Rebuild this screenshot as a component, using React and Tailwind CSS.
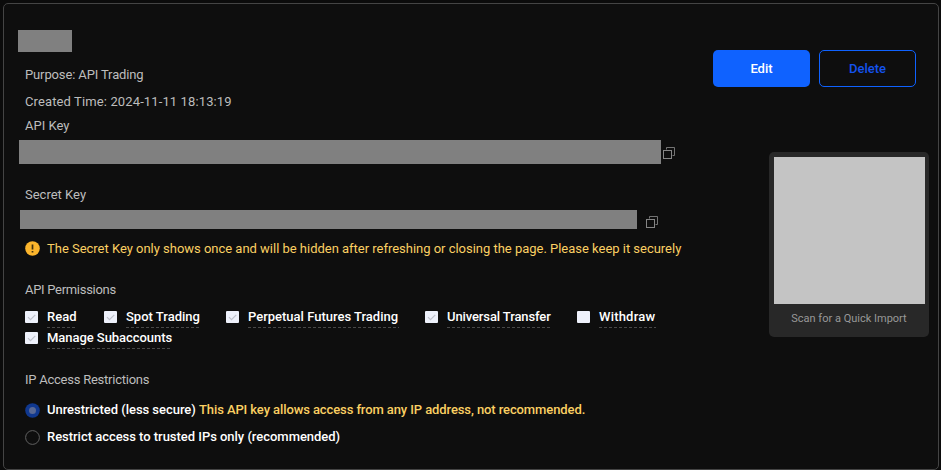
import React from "react";

function CopyIcon({ className }) {
  return (
    <svg viewBox="0 0 12 12" className={"h-3 w-3 shrink-0 " + className} fill="none" stroke="#858585">
      <path d="M3.500 2.500v-2h8v8h-2" strokeOpacity=".85" />
      <rect x=".5" y="3.500" width="8" height="8" />
    </svg>
  );
}

function Checkbox({ checked }) {
  return (
    <svg viewBox="0 0 13 12" className="h-3 w-[13px] shrink-0">
      <rect width="13" height="12" rx="1" fill="#eef1fb" />
      {checked && <path d="M3 6.200l2.500 2.500L10.300 3.900" fill="none" stroke="#bfc2cc" strokeWidth="1.200" />}
    </svg>
  );
}

function Permission({ label, checked = true, className, width }) {
  return (
    <div className={"flex h-[21px] items-start " + className}>
      <div className="mr-[9px] pt-[5px]">
        <Checkbox checked={checked} />
      </div>
      <div className={"h-[22px] whitespace-nowrap text-[13px] leading-[21px] font-medium text-white " + width}>
        {label}
        <svg className="block h-px w-full" preserveAspectRatio="none">
          <line x1="0" y1=".5" x2="100%" y2=".5" stroke="#484848" strokeDasharray="3 2" />
        </svg>
      </div>
    </div>
  );
}

function Label({ children, className }) {
  return <div className={"ml-[21px] h-5 whitespace-nowrap text-[13px] leading-5 text-[#bdbdbd] " + className}>{children}</div>;
}

function Radio({ checked }) {
  return (
    <svg viewBox="0 0 15 15" className="mr-[7px] h-[15px] w-[15px] shrink-0">
      {checked ? (
        <>
          <circle cx="7.500" cy="7.500" r="7.300" fill="#10388f" />
          <circle cx="7.500" cy="7.500" r="3.500" fill="#596995" />
        </>
      ) : (
        <circle cx="7.500" cy="7.500" r="6.900" fill="none" stroke="#606060" />
      )}
    </svg>
  );
}

export default function App() {
  return (
    <div className="h-[470px] w-[941px] bg-[#0b0b0b] pt-[3px] pl-[3px] font-[Roboto,sans-serif]">
      <div className="flex h-[467px] w-[936px] justify-between rounded-[5px] border border-[#444] bg-[#0e0e0e]">
        <div className="w-[690px] shrink-0">
          <div className="mt-[26px] ml-[14px] h-[22px] w-[54px] bg-[#808080]" />
          <Label className="mt-[13px] tracking-[-0.13px]">Purpose: API Trading</Label>
          <Label className="mt-[7px] tracking-[0.12px]">Created Time: 2024-11-11 18:13:19</Label>
          <Label className="mt-1">API Key</Label>
          <div className="mt-1 ml-[15px] flex h-6 items-center">
            <div className="h-6 w-[642px] bg-[#808080]" />
            <CopyIcon className="mt-px ml-[2px]" />
          </div>
          <Label className="mt-[21px]">Secret Key</Label>
          <div className="mt-[5px] ml-4 flex h-[19px] items-start">
            <div className="h-[19px] w-[617px] bg-[#808080]" />
            <CopyIcon className="mt-[6px] ml-[9px]" />
          </div>
          <div className="mt-[10px] ml-[21px] flex h-5 items-center whitespace-nowrap text-[13px] leading-5 tracking-[-0.018px] text-[#fbd063]">
            <svg viewBox="0 0 15 15" className="mr-[7px] -mt-px h-[15px] w-[15px] shrink-0">
              <circle cx="7.500" cy="7.500" r="7.300" fill="#fbb52c" />
              <path d="M7.500 3.500v5M7.500 10v1.600" stroke="#42310f" strokeWidth="1.700" />
            </svg>
            The Secret Key only shows once and will be hidden after refreshing or closing the page. Please keep it securely
          </div>
          <Label className="mt-[21px] tracking-[-0.3px]">API Permissions</Label>
          <div className="mt-[6px] ml-[21px] flex w-[660px] flex-wrap">
            <Permission label="Read" className="w-[79px]" width="w-[30px]" />
            <Permission label="Spot Trading" className="w-[122px]" width="w-[75px]" />
            <Permission label="Perpetual Futures Trading" className="w-[199px]" width="w-[151px]" />
            <Permission label="Universal Transfer" className="w-[152px]" width="w-[104px] tracking-[-0.11px]" />
            <Permission label="Withdraw" checked={false} className="w-[84px]" width="w-[57px] tracking-[0.2px]" />
            <Permission label="Manage Subaccounts" className="w-[180px]" width="w-[125px] tracking-[-0.05px]" />
          </div>
          <Label className="mt-[22px] tracking-[-0.24px]">IP Access Restrictions</Label>
          <div className="mt-[10px] ml-[21px] flex h-5 items-center whitespace-nowrap text-[13px] leading-5 font-medium text-white">
            <Radio checked />
            <span className="w-[152px] tracking-[-0.04px]">Unrestricted (less secure)</span>
            <span className="tracking-[-0.1px] text-[#fbd063]">This API key allows access from any IP address, not recommended.</span>
          </div>
          <div className="mt-[7px] ml-[21px] flex h-5 items-center whitespace-nowrap text-[13px] leading-5 font-medium text-white">
            <Radio />
            <span className="tracking-[-0.03px]">Restrict access to trusted IPs only (recommended)</span>
          </div>
        </div>
        <div className="mt-[46px] mr-[9px] flex flex-col items-end">
          <div className="mr-[13px] flex gap-[9px] text-[13px] font-medium">
            <button className="h-[37px] w-[97px] rounded-[5px] bg-[#0f62ff] text-white">Edit</button>
            <button className="h-[37px] w-[97px] rounded-[5px] border border-[#0f62ff] text-[#1453ee]">Delete</button>
          </div>
          <div className="mt-[65px] h-[185px] w-[160px] rounded-[5px] bg-[#282828] pt-[5px] pl-[5px]">
            <div className="h-[147px] w-[151px] bg-[#c4c4c4]" />
            <div className="mt-[7px] w-[150px] text-center text-[11px] leading-4 text-[#989898]">Scan for a Quick Import</div>
          </div>
        </div>
      </div>
    </div>
  );
}
